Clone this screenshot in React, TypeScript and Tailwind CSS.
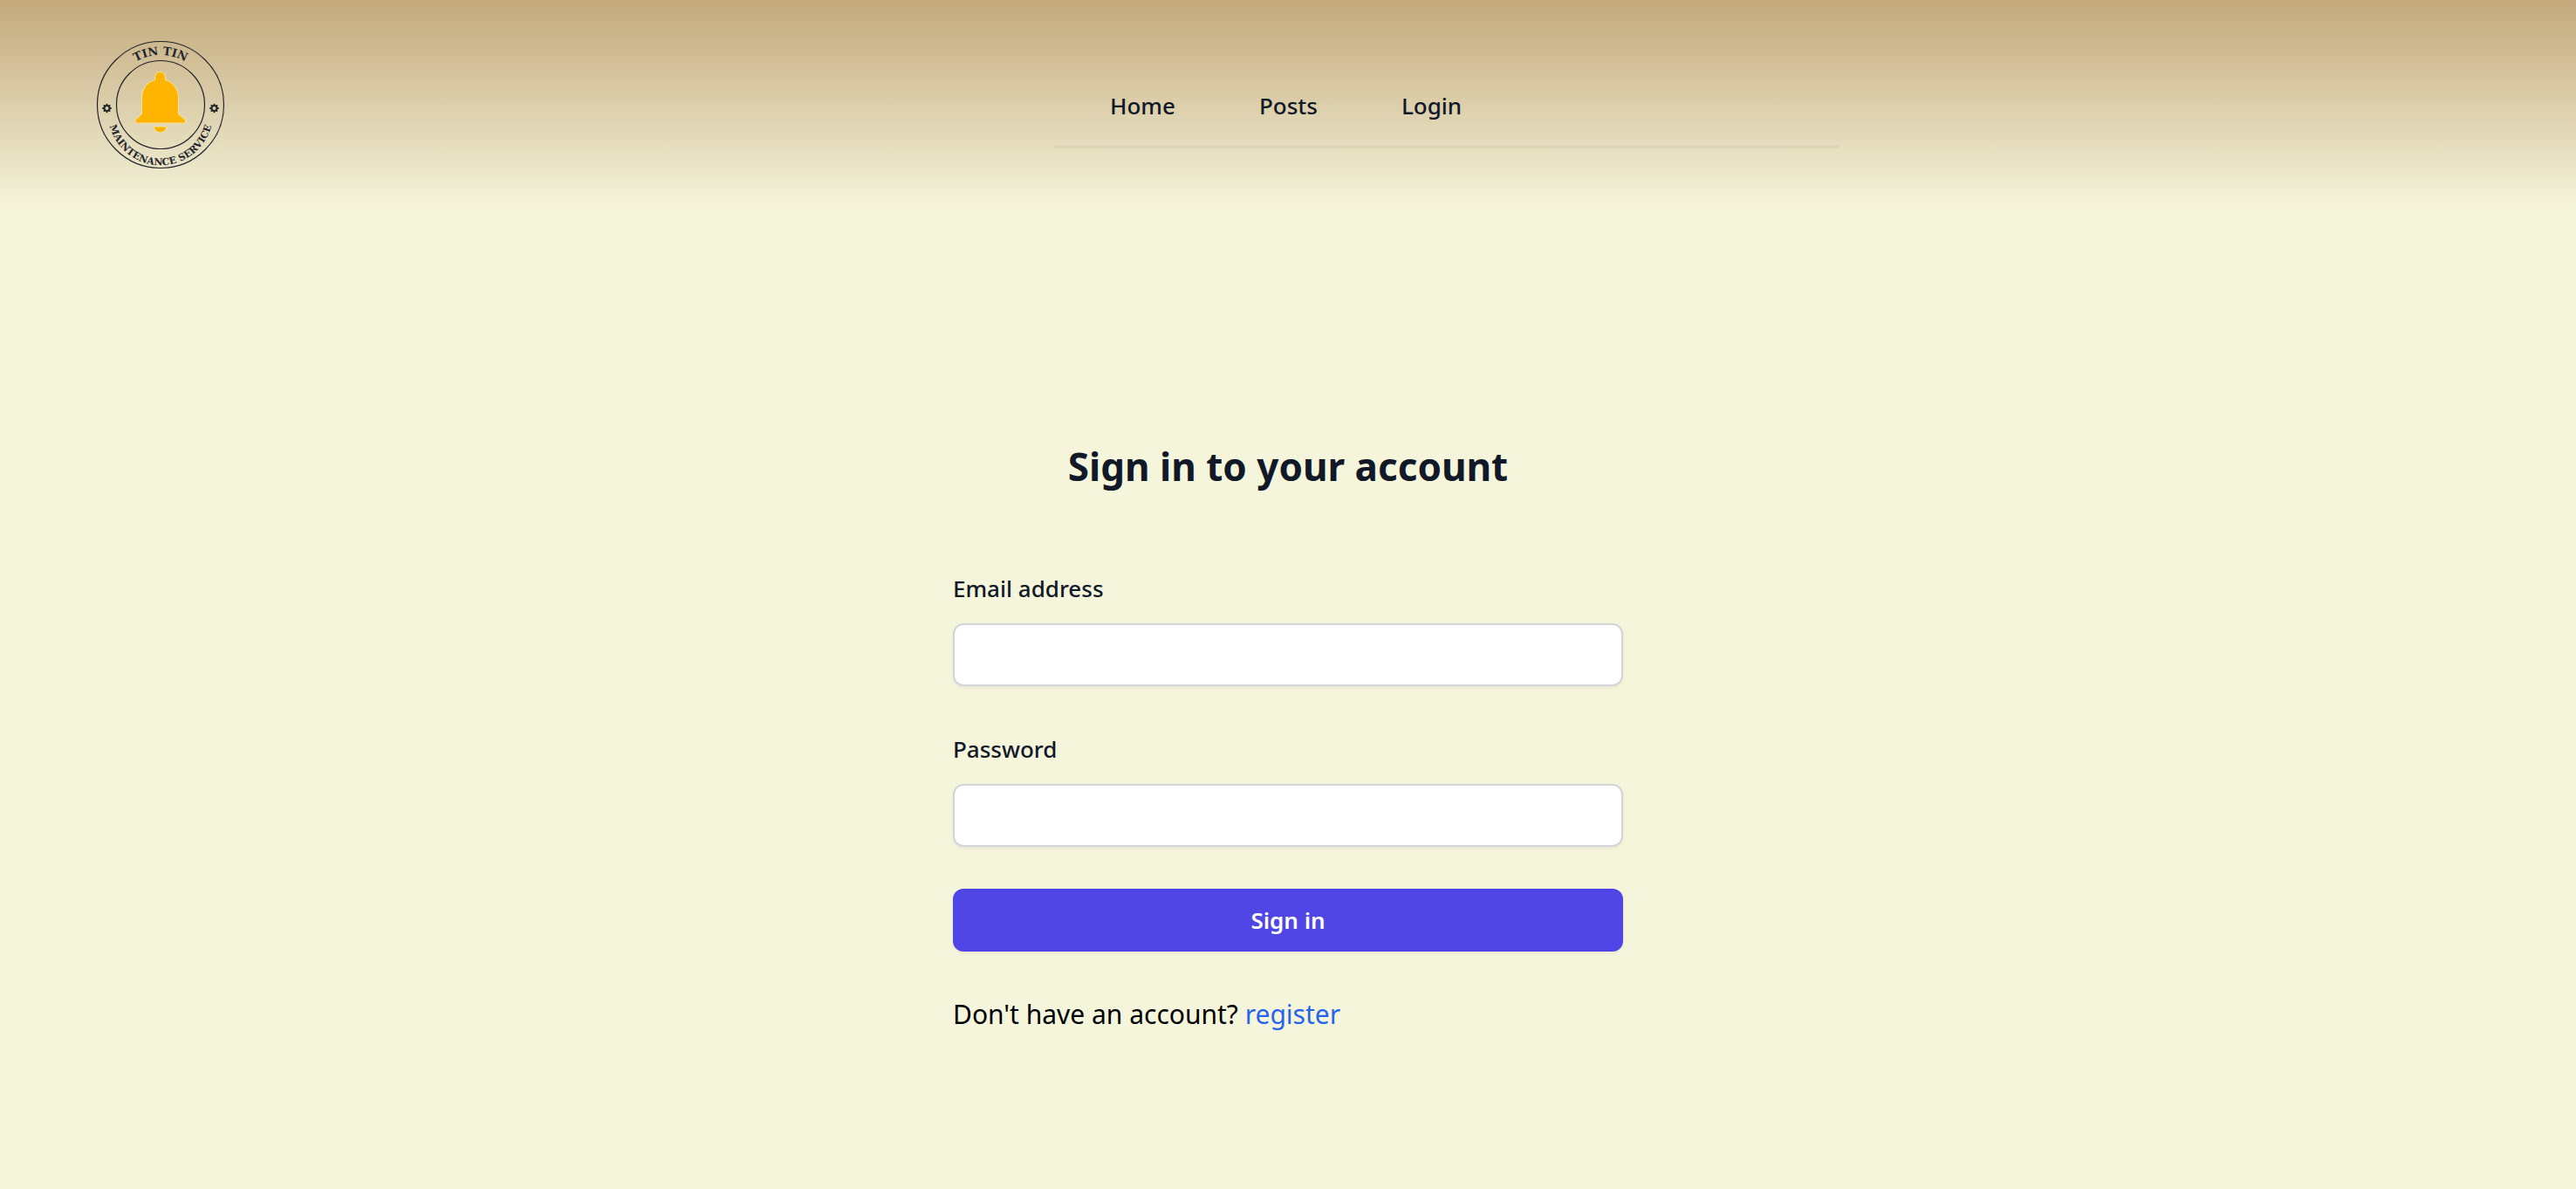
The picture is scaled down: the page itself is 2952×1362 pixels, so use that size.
function Gear({ x, y }: { x: number; y: number }) {
  return (
    <g transform={`translate(${x} ${y})`} stroke="#22252b" fill="none">
      <circle r="3" strokeWidth="2" />
      {[0, 45, 90, 135, 180, 225, 270, 315].map((a) => (
        <path key={a} d="M0 -3.500V-5.200" strokeWidth="1.800" transform={`rotate(${a})`} />
      ))}
    </g>
  );
}

function Logo() {
  return (
    <svg viewBox="0 0 148 148" className="size-37" role="img" aria-label="Tin Tin Maintenance Service">
      <defs>
        <path id="arc-top" d="M17 74A57 57 0 0 1 131 74" />
        <path id="arc-bottom" d="M15.500 70A60 60 0 1 0 132.500 70" />
      </defs>
      <g fill="none" stroke="#22252b" strokeWidth="1.2">
        <circle cx="74" cy="74" r="72.500" />
        <circle cx="74" cy="74" r="50.500" />
      </g>
      <g fill="#22252b" fontFamily="'DejaVu Serif', serif" fontWeight="700" textAnchor="middle">
        <text fontSize="13">
          <textPath href="#arc-top" startOffset="50%">TIN TIN</textPath>
        </text>
        <text fontSize="11">
          <textPath href="#arc-bottom" startOffset="50%">MAINTENANCE SERVICE</textPath>
        </text>
      </g>
      <Gear x={12.5} y={78} />
      <Gear x={135.5} y={78} />
      <g fill="#ffb400" stroke="#f5e6a0" strokeWidth="1">
        <path d="M67.500 43C67.500 34 79.500 34 79.500 43V45.500C88.500 48 94.500 56 94.500 66V84.500L102.500 91.500V95H45V91.500L52.500 84.500V66C52.500 56 58.500 48 67.500 45.500Z" />
        <path d="M66 99H81C79.500 108 67.500 108 66 99Z" />
      </g>
    </svg>
  );
}

function Field({ id, label, type }: { id: string; label: string; type: string }) {
  return (
    <div className="flex flex-col gap-4">
      <label htmlFor={id} className="text-[26px] leading-12 font-medium text-[#111827]">
        {label}
      </label>
      <input
        id={id}
        type={type}
        className="h-18 w-full rounded-xl border-2 border-[#d1d5db] bg-white px-4 text-[26px] text-[#111827] shadow-[0_2px_4px_rgba(0,0,0,0.05)]"
      />
    </div>
  );
}

export default function App() {
  return (
    <div className="min-h-screen bg-[#f5f5dc] font-['Noto_Sans','Segoe_UI',sans-serif]">
      <header className="grid h-60 grid-cols-[1208fr_900fr_844fr] items-center bg-linear-to-b from-[#c3a97c] to-[#f5f5dc]">
        <a href="#home" className="ml-[110px] justify-self-start">
          <Logo />
        </a>
        <nav className="mt-22 flex h-[82px] gap-24 self-start border-b-4 border-[#dcd5b7] pl-16 text-[26px] leading-[66px] font-medium text-[#111827]">
          <a href="#home">Home</a>
          <a href="#posts">Posts</a>
          <a href="#login">Login</a>
        </nav>
      </header>

      <main className="mx-auto flex w-full max-w-[768px] flex-col pt-[258px]">
        <h1 className="text-center text-[44px] leading-18 font-bold text-[#111827]">Sign in to your account</h1>
        <form className="mt-20 flex flex-col gap-12" onSubmit={(e) => e.preventDefault()}>
          <Field id="email" label="Email address" type="email" />
          <Field id="password" label="Password" type="password" />
          <button
            type="submit"
            className="h-18 rounded-xl bg-[#4f46e5] text-[26px] font-semibold text-white shadow-[0_2px_4px_rgba(0,0,0,0.05)]"
          >
            Sign in
          </button>
        </form>
        <p className="mt-12 text-[30px] leading-12 text-black">
          Don't have an account?{" "}
          <a href="#register" className="text-[#2563eb]">
            register
          </a>
        </p>
      </main>
    </div>
  );
}
